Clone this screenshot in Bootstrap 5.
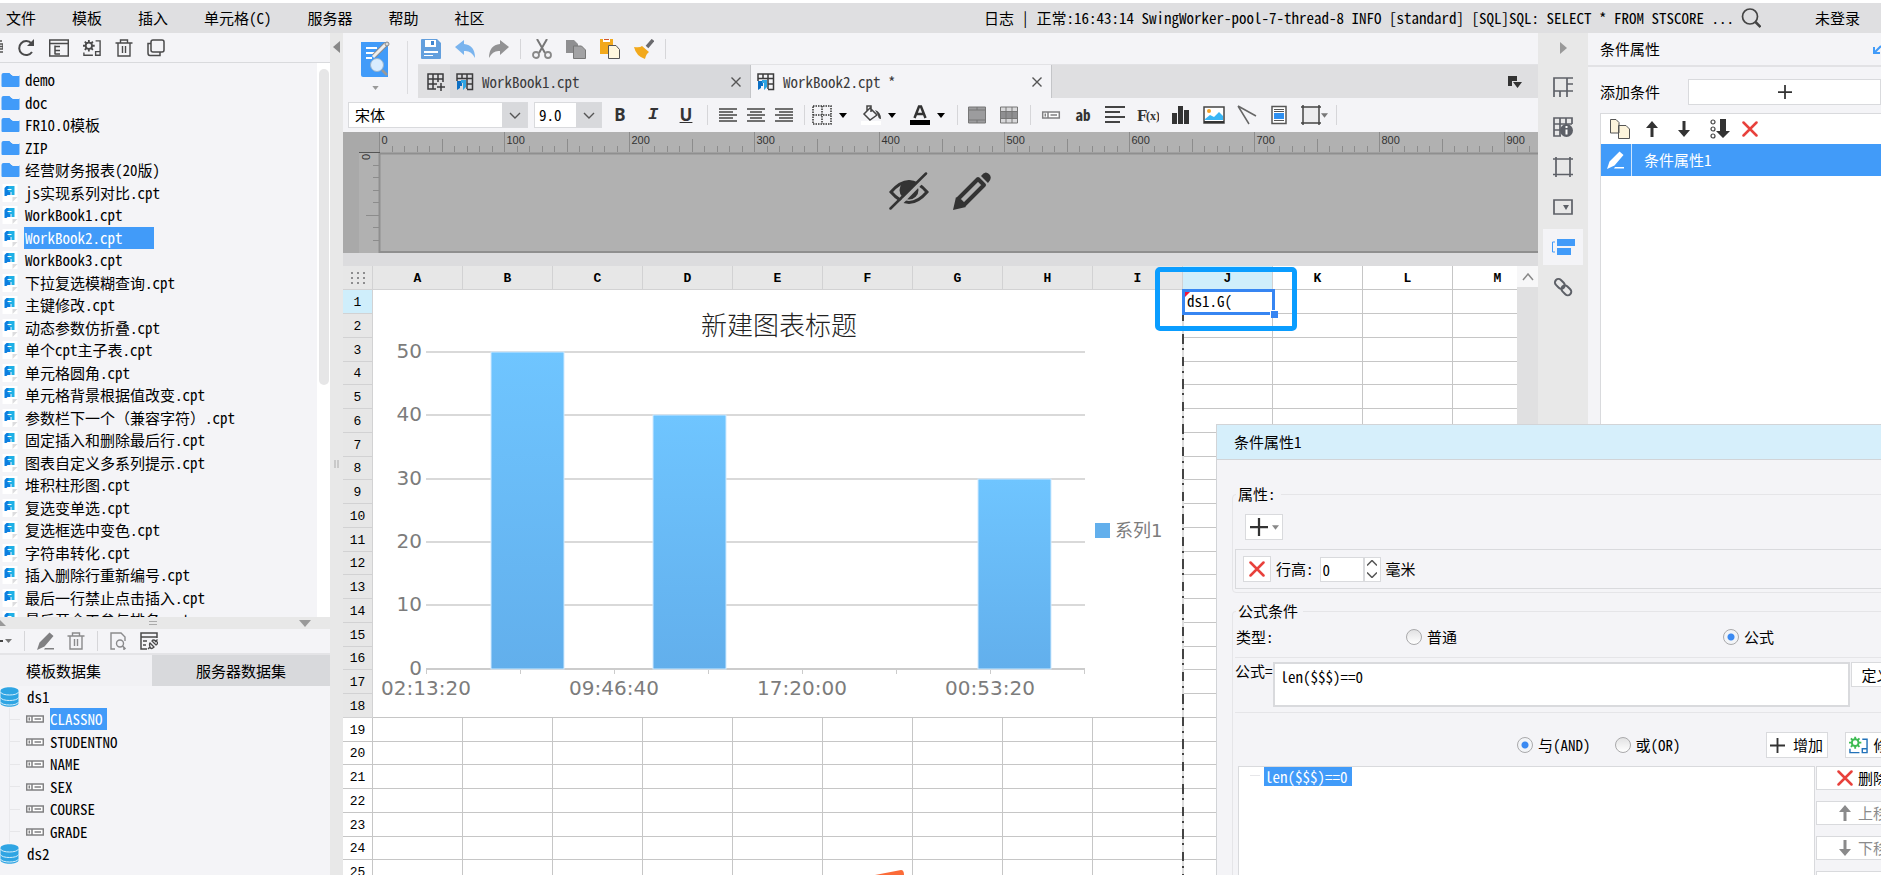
<!DOCTYPE html>
<html lang="zh-CN">
<head>
<meta charset="utf-8">
<meta name="viewport" content="width=device-width, initial-scale=1">
<title>报表设计器</title>
<link href="https://cdn.jsdelivr.net/npm/bootstrap@5.3.0/dist/css/bootstrap.min.css" rel="stylesheet">
<style>
:root{--panel:#f4f4f7;--bar:#dfdfe1;--tab:#d8d9dc;--gutter:#e8e8e8;--line:#d9dadd;--accent:#419bf9;--ink:#333334;}
body{font-family:"Noto Sans CJK SC",sans-serif;font-feature-settings:"hwid";font-size:15px;line-height:22px;color:#000;background:#fff;white-space:nowrap}
button,input,select,textarea{font:inherit;font-feature-settings:inherit;color:inherit}
button{background:none;border:0;padding:0}
svg{display:block;flex:none}
a{color:inherit;text-decoration:none}
.icon{width:20px;height:20px}
.full-width{font-feature-settings:normal}
.menubar{height:33px;background:var(--bar);border-top:3px solid #fff}
.menulist{gap:36px;padding-left:6px}
.log-line{margin-right:7px}
.login-link{margin:0 21px 0 54px}
.side{width:330px;background:var(--panel)}
.side-tools{height:30px;border-bottom:1px solid var(--line);gap:14px}
.tree-list li{height:22px}
.tree-list li:nth-child(even){height:23px}
.file-tree{padding:6px 0 0 1px}
.file-tree li{gap:5px}
.picked{background:var(--accent);color:#fff}
.picked-file{padding:0 31px 0 1px;margin-left:-1px}
.scroll-track{width:13px;background:#fff;padding:6px 1px 0 2px}
.scroll-thumb{height:316px;background:#e6e6e7;border-radius:5px}
.side-split{height:12px;background:var(--gutter)}
.data-tools{height:26px;border-bottom:2px solid #e4e4e7;gap:12px}
.data-tabs{height:31px}
.data-tabs button{background:#f1f1f4}
.data-tabs .own{width:46%;padding-left:26px}
.data-tabs .rest{background:var(--tab)}
.data-pane{height:189px}
.field-list{margin-left:9px;border-left:1px solid #e9e9ec}
.field-list li{gap:6px}
.stub{width:10px;height:1px;background:#e6e6e9}
.gutter{width:13px;background:var(--gutter)}
.app-top{background:var(--panel)}
.mode-btn{width:64px;padding-top:7px}
.mode-sep{width:1px;height:53px;background:#dcdcdf;margin:8px 10px 0 0}
.quick{height:32px;padding-left:3px;gap:14px;border-bottom:1px solid #e2e2e5}
.vsep{width:1px;height:20px;background:#d6d6d9;flex:none}
.quick .vsep{margin:0 -3px}
.tabstrip{height:33px;background:var(--bar)}
.book-tab{width:301px;background:var(--tab);color:#3b3b3c;border-right:1px solid #c4c5c8;padding:0 9px 0 6px}
.book-tab.on{background:var(--panel)}
.fmt{height:34px;padding-left:5px;background:var(--panel)}
.fmt .vsep{margin:0 6px}
.pick{appearance:none;border:1px solid var(--line);height:26px;padding:0 6px;background:url("data:image/svg+xml,%3Csvg xmlns='http://www.w3.org/2000/svg' width='25' height='24'%3E%3Cpath d='M0 0h25v24H0z' fill='%23d8d9dc'/%3E%3Cpath d='M8 10l5 5 5-5' fill='none' stroke='%23555' stroke-width='1.4'/%3E%3C/svg%3E") right center no-repeat #fff}
.pick-font{width:180px;margin-right:6px}
.pick-size{width:68px;padding-left:4px}
.txtbtn{width:33px;padding-left:3px;font-family:"Noto Sans",sans-serif;font-size:17px;color:var(--ink)}
.albtn{width:28px}
.dropset{gap:14px;padding:0 6px 0 1px}
.drop{gap:7px}
.toolset{gap:12px}
.merge-set{padding:0 5px 0 3px}
.ab-btn{color:#333}
.float-btn{color:#777}
.canvas{height:121px;background:#b1b1b1}
.canvas-tools{left:546px;top:40px;gap:24px}
.band{height:13px;background:#dcdcde}
.sheet{background:#fff}
.grid{table-layout:fixed;width:1200px;border-collapse:separate;border-spacing:0;font-size:14px}
.grid tr{height:24px}
.grid tbody tr:nth-child(4n){height:23px}
.grid th,.grid td{padding:0;border:solid #c6c6c6;border-width:0 1px 1px 0;line-height:20px}
.grid th{font-family:"Liberation Mono",monospace;font-size:13px;font-weight:700;text-align:center;vertical-align:bottom;background:#fff}
.grid th:first-child{vertical-align:middle}
.grid tbody th:first-child{font-weight:400;vertical-align:bottom}
.grid th.used{background:#e7e7e7;border-color:#d2d2d3}
.grid th.now{background:#cfeefb;border-color:#d2d2d3}
.grid .chart-cell{border-right-color:#fff}
.cell-now{left:839px;top:23px;width:93px;height:26px;border:3px solid #3685f2;background:#fff;padding-left:2px;line-height:18px}
.cell-now::before{content:"";position:absolute;left:0;top:0;border:solid transparent;border-width:0 5px 5px 0;border-top:5px solid #f0143c}
.cell-now::after{content:"";position:absolute;right:-6px;bottom:-6px;width:8px;height:8px;background:#3685f2;border:solid #fff;border-width:1px 0 0 1px}
.page-edge{left:839px;top:46px;bottom:0;width:2px;background:repeating-linear-gradient(#444 0 9px,#ddd 9px 14px,#444 14px 16px,#ddd 16px 22px,#444 22px 32px,#ddd 32px 36px,#444 36px 38px,#ddd 38px 45px)}
.mark-box{left:812px;top:1px;width:142px;height:64px;border:5px solid #0a9dff;border-radius:5px}
.stamp{left:532px;bottom:0}
.vscroll{width:21px;background:#e0e0e1}
.vscroll button{height:21px;background:#f7f7f8}
.strip{width:50px;background:var(--gutter);gap:4px;padding-top:9px}
.strip button{width:40px;height:36px}
.strip button.on{background:var(--panel)}
.strip .fold{height:12px;margin-bottom:11px}
.props{width:293px;background:var(--panel)}
.props-head{height:34px;border-bottom:2px solid #e2e2e5;padding-left:12px}
.add-row{padding:12px 0 8px 12px}
.add-btn{width:193px;height:26px;background:#fff;border:1px solid var(--line)}
.cond-list{margin-left:12px;border:solid var(--line);border-width:1px 0 0 1px;background:#fff}
.cond-tools{height:30px;padding-left:9px;gap:12px}
.cond-row{height:32px;background:var(--accent);color:#fff}
.cond-pen{width:31px;height:32px;border-right:1px solid #cfe5fd}
.dialog-box{top:424px;right:0;bottom:0;width:665px;background:var(--panel);border:solid #d2d4d7;border-width:1px 0 0 1px}
.dialog-head{height:35px;background:#d6effb;border-bottom:1px solid #d2d4d7;padding-left:17px}
.dialog-in{width:700px;padding-left:15px}
.group{border:1px solid #e5e5e8;border-radius:4px}
.group legend{float:none;width:auto;font-size:15px;line-height:22px;margin:0 0 0 1px;padding:0 5px 0 2px}
.group-a{margin-top:23px;padding:0 0 3px 2px}
.group-b{margin-top:7px;padding-left:2px;border-bottom:0}
.plus-btn{width:38px;height:26px;margin:9px 0 9px 10px}
.btn-box{background:#fff;border:1px solid var(--line);flex:none}
.height-row{height:40px;border:1px solid var(--line);padding-left:7px}
.kill-btn{width:28px;height:26px;margin-right:5px}
.num-box{width:44px;height:25px;border:1px solid var(--line);padding:0 2px;margin-left:6px}
.spin{width:17px;height:25px;margin-right:5px}
.spin button{height:12px}
.type-row{display:grid;grid-template-columns:170px 317px auto;height:30px;margin-left:1px}
.rule{height:1px;background:#e5e5e8;margin:5px 0 4px}
.dot{appearance:none;width:16px;height:16px;border:1px solid #a9a9ab;border-radius:50%;background:linear-gradient(#e2e2e3,#fff);margin:0 5px 0 0;flex:none}
.dot:checked{background:radial-gradient(#3b8af2 0 3px,#f2f4f7 4px)}
.formula-label{width:38px;line-height:17px}
.formula-box{width:577px;height:45px;border:2px solid var(--line);padding:2px 6px;resize:none;background:#fff;margin-right:1px;flex:none}
.define-btn{width:70px;height:25px;padding-left:10px}
.logic-row{margin:15px 0 8px 282px}
.add-cond{width:62px;height:26px;margin:0 17px 0 85px}
.edit-cond{width:80px;height:26px;padding-left:3px;gap:6px}
.cond-tree{width:577px;border:1px solid var(--line);background:#fff;margin:0 1px 0 3px;padding-left:11px;flex:none}
.cond-tree span.picked{padding:0 4px 0 1px;line-height:19px}
.cond-acts{gap:11px}
.cond-acts button{width:100px;height:24px;padding-left:20px;gap:5px}
.cond-acts .dim{color:#8a8a8b}
</style>
</head>
<body class="vh-100 overflow-hidden d-flex flex-column position-relative">

<svg width="0" height="0" class="position-absolute">
 <defs>
  <symbol id="folder" viewBox="0 0 18 16"><path fill="#419bf9" d="M0 3Q0 1 2 1h6l2 2h8v11q0 1-1 1H1q-1 0-1-1z"/><path stroke="#f4f4f7" d="M8 0l3 3.500h7" fill="none"/></symbol>
  <symbol id="cpt" viewBox="0 0 16 18"><path fill="#fff" d="M0 0h15v18H0z"/><path fill="#dcdcde" d="M10 13h5l-5 5z"/><path fill="#0b7fe0" d="M2 4l2-2h4v9H5l-1 1H2z"/><path fill="#1fb0e6" d="M6 2h6v9H9V8H6z"/><path fill="#fff" d="M5 5h4v1H5z"/></symbol>
  <symbol id="db" viewBox="0 0 18 20"><path fill="#2fa5e3" d="M0 4c0-5 18-5 18 0v12c0 5-18 5-18 0z"/><path fill="none" stroke="#d5eefb" d="M0 5c1 4 17 4 18 0M0 10.500c1 4 17 4 18 0M0 15c1 4 17 4 18 0"/></symbol>
  <symbol id="field" viewBox="0 0 18 8"><path fill="#fff" stroke="#808082" stroke-width="1.500" d="M.7 1h16.600v6H.7zM6 1v6M8.500 4h6.500M3.300 2.500v3"/></symbol>
  <symbol id="book" viewBox="0 0 18 18"><path fill="none" stroke="#3b3b3c" stroke-width="1.500" d="M1 8V1h15.500v15.500H11M1 5.500h15.500M6 1v5M11 1v15M11 11h5.500"/><path fill="#0b6fc4" d="M1 8h3v7l-3 2z"/><path fill="#0b6fc4" d="M4 8h2v5H4z"/><path fill="#2fa5e3" d="M5 7h5v7l-3 3V10H5z"/></symbol>
  <symbol id="close" viewBox="0 0 10 10"><path stroke="#555" stroke-width="1.400" d="M.5.5l9 9M9.500.5l-9 9"/></symbol>
  <symbol id="redx" viewBox="0 0 16 16"><path stroke="#e8413c" stroke-width="2.500" stroke-linecap="round" d="M1.500 1.500l13 13M14.500 1.500l-13 13"/></symbol>
  <symbol id="trash" viewBox="0 0 18 18"><path fill="none" stroke="currentColor" stroke-width="1.400" d="M.5 4h17M5.500 4V1h7v3M3 4v13h12V4M7.500 7v7M10.500 7v7"/></symbol>
  <symbol id="plus" viewBox="0 0 16 16"><path stroke="#333" stroke-width="2" d="M8 0v16M0 8h16"/></symbol>
  <symbol id="up" viewBox="0 0 12 16"><path fill="currentColor" d="M6 0l6 7H7.500v9h-3V7H0z"/></symbol>
  <symbol id="down" viewBox="0 0 12 16"><path fill="currentColor" d="M6 16l6-7H7.500V0h-3v9H0z"/></symbol>
  <symbol id="caret" viewBox="0 0 8 5"><path fill="currentColor" d="M0 0h8L4 5z"/></symbol>
  <symbol id="pen" viewBox="0 0 18 18"><path fill="currentColor" d="M12.500 0.500l4 3.500-9 10.500L0 18l2.500-7.500zM8 16h9v1.500H7z"/></symbol>
  <symbol id="gearbox" viewBox="0 0 20 18"><circle cx="6.500" cy="6.500" r="3.500" fill="none" stroke="currentColor" stroke-width="2"/><path stroke="currentColor" stroke-width="2" d="M6.500 0v3M6.500 10v3M0 6.500h3M10 6.500h3M2 2l2 2M9 9l2 2M2 11l2-2M9 4l2-2"/></symbol>
 </defs>
</svg>

<header class="menubar d-flex align-items-center justify-content-between flex-shrink-0">
 <nav class="menulist d-flex">
  <a href="#">文件</a><a href="#">模板</a><a href="#">插入</a><a href="#">单元格(C)</a><a href="#">服务器</a><a href="#">帮助</a><a href="#">社区</a>
 </nav>
 <div class="d-flex align-items-center">
  <span class="log-line">日志 | 正常:16:43:14 SwingWorker-pool-7-thread-8 INFO [standard] [SQL]SQL: SELECT * FROM STSCORE ...</span>
  <button type="button" aria-label="搜索"><svg class="icon" viewBox="0 0 20 20"><circle cx="9" cy="8.500" r="7.500" fill="none" stroke="#444" stroke-width="1.700"/><path stroke="#444" stroke-width="2.500" d="M14.500 14l5 5"/></svg></button>
  <a href="#" class="login-link">未登录</a>
 </div>
</header>

<div class="d-flex flex-fill overflow-hidden">
 <aside class="side d-flex flex-column flex-shrink-0 overflow-hidden">
  <div class="side-tools d-flex align-items-center flex-shrink-0">
   <svg width="3" height="18" viewBox="0 0 3 18"><path fill="none" stroke="#555" stroke-width="1.500" d="M0 2h2M0 5h3v5H0M0 7.500h3M0 13h3"/></svg>
   <button type="button" aria-label="刷新"><svg width="18" height="18" viewBox="0 0 18 18"><path fill="none" stroke="#4a4a4b" stroke-width="2" d="M15 13a7 7 0 1 1-.5-8.500"/><path fill="#4a4a4b" d="M17 0v7h-7z"/></svg></button>
   <button type="button" aria-label="目录"><svg class="icon" viewBox="0 0 20 18"><path fill="none" stroke="#4a4a4b" stroke-width="1.500" d="M.7 1h18.600v16H.7zM.7 4.500h18.600M6 6.500v9M6 7.500h5M6 11.500h5M6 15h5"/></svg></button>
   <button type="button" aria-label="设置"><svg width="18" height="18" viewBox="0 0 20 18" color="#4a4a4b"><use href="#gearbox"/><path fill="none" stroke="#4a4a4b" stroke-width="1.500" d="M14 1h5v16h-5v-4h5M1 14v3h10"/></svg></button>
   <button type="button" aria-label="删除"><svg width="18" height="18" color="#4a4a4b"><use href="#trash"/></svg></button>
   <button type="button" aria-label="复制"><svg width="18" height="18" viewBox="0 0 18 18"><rect x="4" y="1" width="13" height="12" rx="2" fill="none" stroke="#4a4a4b" stroke-width="1.500"/><path fill="none" stroke="#4a4a4b" stroke-width="1.500" d="M4 4.500H1V14q0 2.500 2 2.500h10V13"/></svg></button>
  </div>
  <div class="d-flex flex-fill overflow-hidden">
   <ul class="file-tree tree-list list-unstyled mb-0 flex-fill overflow-hidden" id="files"></ul>
   <div class="scroll-track"><div class="scroll-thumb"></div></div>
  </div>
  <div class="side-split d-flex justify-content-between align-items-center flex-shrink-0">
   <svg width="6" height="6"><path fill="#999" d="M0 0l6 6H0z"/></svg>
   <svg width="8" height="5"><path stroke="#aaa" d="M0 .5h8M0 3.500h8"/></svg>
   <svg width="31" height="7"><path fill="#999" d="M0 0h12L6 7z"/></svg>
  </div>
  <div class="data-tools d-flex align-items-center flex-shrink-0">
   <svg width="12" height="20" viewBox="0 0 12 20"><path fill="#444" d="M0 9h3v2H0z"/><path fill="#777" d="M5 8h7l-3.500 4z"/></svg>
   <span class="vsep"></span>
   <button type="button" aria-label="编辑"><svg width="18" height="18" color="#808082"><use href="#pen"/></svg></button>
   <button type="button" aria-label="删除"><svg width="18" height="18" color="#8a8a8c"><use href="#trash"/></svg></button>
   <span class="vsep"></span>
   <button type="button" aria-label="预览"><svg width="18" height="18" viewBox="0 0 18 18"><path fill="none" stroke="#8a8a8c" stroke-width="1.400" d="M5 17H1V1h10l4 4v4M15 17h-2"/><circle cx="10" cy="11.500" r="3.500" fill="none" stroke="#8a8a8c" stroke-width="1.400"/><path stroke="#8a8a8c" stroke-width="1.700" d="M12.500 14l3 3"/></svg></button>
   <button type="button" aria-label="连接"><svg width="18" height="18" viewBox="0 0 18 18"><path fill="none" stroke="#4a4a4b" stroke-width="1.500" d="M7 17H1V1h16v5M1 5h16M3 9h4M3 13h3"/><path fill="none" stroke="#4a4a4b" stroke-width="1.300" d="M17.500 7.500L15 10M8 17l2-2M10 11l4 4q-3 3-4 0t0-4zM12 9l4 4q3-2 0-4t-4 0z"/></svg></button>
  </div>
  <div class="data-tabs d-flex flex-shrink-0">
   <button type="button" class="own text-start">模板数据集</button><button type="button" class="rest flex-fill">服务器数据集</button>
  </div>
  <div class="data-pane flex-shrink-0">
   <div class="d-flex align-items-center gap-2"><svg width="19" height="20"><use href="#db"/></svg>ds1</div>
   <ul class="field-list tree-list list-unstyled mb-0" id="fields"></ul>
   <div class="d-flex align-items-center gap-2"><svg width="19" height="20"><use href="#db"/></svg>ds2</div>
  </div>
 </aside>
 <div class="gutter flex-shrink-0 d-flex flex-column align-items-center">
  <svg width="7" height="12" class="mt-2"><path fill="#888" d="M7 0v12L0 6z"/></svg>
  <svg width="5" height="8" class="my-auto"><path stroke="#aaa" d="M1 0v8M4 0v8"/></svg>
 </div>

 <main class="flex-fill d-flex flex-column overflow-hidden">
  <div class="app-top d-flex flex-shrink-0">
   <button type="button" class="mode-btn d-flex flex-column align-items-center" aria-label="预览模式">
    <svg width="30" height="38" viewBox="0 0 30 38"><path fill="#419bf9" d="M1 2h27v35H3q-2 0-2-2z"/><path stroke="#fff" stroke-width="2" d="M6 8h11M6 13h9M6 18h6"/><path stroke="#8b8b8d" stroke-width="5" d="M26 4L14 16"/><path stroke="#eee" stroke-width="3" d="M26 4L13 17"/><circle cx="27" cy="4" r="2" fill="#ddd" stroke="#888"/><circle cx="17" cy="25" r="6.500" fill="#d9ecfe" stroke="#9ab4cc"/><path stroke="#999" stroke-width="2.500" d="M22 30l5 5"/></svg>
    <svg width="7" height="4" class="mt-2" color="#999"><use href="#caret"/></svg>
   </button>
   <div class="mode-sep"></div>
   <div class="flex-fill">
    <div class="quick d-flex align-items-center">
     <button type="button" aria-label="保存"><svg class="icon" viewBox="0 0 20 20"><path fill="#639fdd" d="M0 1q0-1 1-1h15l4 4v15q0 1-1 1H1q-1 0-1-1z"/><path fill="#fff" d="M4 1h11v7H4zM3 12h14v2H3zM3 16h9v1H3z"/><path fill="#3f86d2" d="M10 2h3v4h-3z"/></svg></button>
     <button type="button" aria-label="撤销"><svg class="icon" viewBox="0 0 20 20"><path fill="#7ab4ee" d="M0 8L9 1v4q11 1 11 14-4-8-11-7v4z"/></svg></button>
     <button type="button" aria-label="重做"><svg class="icon" viewBox="0 0 20 20"><path fill="#929294" d="M20 8L11 1v4Q0 6 0 19q4-8 11-7v4z"/></svg></button>
     <div class="vsep"></div>
     <button type="button" aria-label="剪切"><svg class="icon" viewBox="0 0 20 20"><path stroke="#777" stroke-width="2" d="M5 0l8 14M15 0L7 14"/><circle cx="4" cy="16" r="3" fill="none" stroke="#888" stroke-width="1.800"/><circle cx="16" cy="16" r="3" fill="none" stroke="#888" stroke-width="1.800"/></svg></button>
     <button type="button" aria-label="复制"><svg class="icon" viewBox="0 0 20 20"><path fill="#8f8f91" d="M0 1h8l4 4v9H0z"/><path fill="#a2a2a4" stroke="#777" d="M7.500 7h8l4 4v8.500h-12z"/></svg></button>
     <button type="button" aria-label="粘贴"><svg class="icon" viewBox="0 0 20 20"><path fill="#f2a91c" d="M0 0h13v15H0z"/><path fill="#fff" d="M3 0h7v3H3z"/><path fill="#d0542c" d="M4 0h5v1H4z"/><path fill="#fff7de" stroke="#555" d="M8.500 6.500H16l3.500 4v9h-11z"/></svg></button>
     <button type="button" aria-label="格式刷"><svg class="icon" viewBox="0 0 20 20"><path stroke="#6a6a6e" stroke-width="3.500" d="M19 1l-6 7"/><path fill="#f2a91c" d="M0 8q6 1 8-1l7 6q-3 2-4 7Q2 17 0 8z"/></svg></button>
     <div class="vsep"></div>
    </div>
    <div class="tabstrip d-flex align-items-center">
     <button type="button" class="ps-2 pe-1" aria-label="新建"><svg width="20" height="18" viewBox="0 0 20 18"><path fill="none" stroke="#3b3b3c" stroke-width="1.500" d="M10 16H2V1h15v8M2 6h15M2 11h9M7 1v15M12 1v8M15 10v8M11 14h8"/></svg></button>
     <div class="book-tab h-100 d-flex align-items-center gap-2"><svg width="18" height="18"><use href="#book"/></svg>WorkBook1.cpt<button type="button" class="ms-auto" aria-label="关闭"><svg width="10" height="10"><use href="#close"/></svg></button></div>
     <div class="book-tab on h-100 d-flex align-items-center gap-2"><svg width="18" height="18"><use href="#book"/></svg>WorkBook2.cpt *<button type="button" class="ms-auto" aria-label="关闭"><svg width="10" height="10"><use href="#close"/></svg></button></div>
     <button type="button" class="ms-auto me-3" aria-label="模板列表"><svg width="14" height="12" viewBox="0 0 14 12"><path fill="#333" d="M0 0h9v5H4v5H0zM5 6h9l-4.500 6z"/></svg></button>
    </div>
   </div>
  </div>
  <div class="fmt d-flex align-items-center flex-shrink-0">
   <select class="pick pick-font" aria-label="字体"><option>宋体</option></select>
   <select class="pick pick-size" aria-label="字号"><option>9.0</option></select>
   <button type="button" class="txtbtn fw-bold">B</button>
   <button type="button" class="txtbtn fst-italic font-monospace fw-bold">I</button>
   <button type="button" class="txtbtn text-decoration-underline fw-bold">U</button>
   <div class="vsep"></div>
   <button type="button" class="albtn" aria-label="左对齐"><svg width="18" height="14" class="mx-auto"><path stroke="#444" stroke-width="1.500" d="M0 1h18M0 4h14M0 7h18M0 10h14M0 13h18"/></svg></button>
   <button type="button" class="albtn" aria-label="居中"><svg width="18" height="14" class="mx-auto"><path stroke="#444" stroke-width="1.500" d="M0 1h18M3 4h12M0 7h18M3 10h12M0 13h18"/></svg></button>
   <button type="button" class="albtn" aria-label="右对齐"><svg width="18" height="14" class="mx-auto"><path stroke="#444" stroke-width="1.500" d="M0 1h18M4 4h14M0 7h18M4 10h14M0 13h18"/></svg></button>
   <div class="vsep"></div>
   <div class="dropset d-flex">
    <button type="button" class="drop d-flex align-items-center" aria-label="边框"><svg class="icon" viewBox="0 0 20 20"><path fill="none" stroke="#333" stroke-width="1.500" stroke-dasharray="1.500 1" d="M1 1h18v18H1zM10 1v18M1 10h18"/></svg><svg width="8" height="5"><use href="#caret"/></svg></button>
    <button type="button" class="drop d-flex align-items-center" aria-label="填充"><svg class="icon" viewBox="0 0 20 20"><path fill="#fff" d="M0 16h20v4H0z"/><path fill="none" stroke="#444" stroke-width="1.500" d="M9 3l7 7-7 5-6-6zM6 6V1h4v6"/><path fill="#444" d="M14 5q6 2 6 9-3 0-3-4z"/></svg><svg width="8" height="5"><use href="#caret"/></svg></button>
    <button type="button" class="drop d-flex align-items-center" aria-label="文字颜色"><svg class="icon" viewBox="0 0 20 20"><path d="M0 15h20v5H0z"/><path fill="none" stroke="#333" stroke-width="2.500" d="M4.500 13L9 1.500h2L15.500 13M6 9h8"/></svg><svg width="8" height="5"><use href="#caret"/></svg></button>
   </div>
   <div class="vsep"></div>
   <div class="toolset merge-set d-flex align-items-center">
    <button type="button" aria-label="合并"><svg class="icon" viewBox="0 0 20 20"><path fill="#9c9c9e" stroke="#777" d="M1.500 2h17v16h-17zM1.500 5h17M1.500 15h17M10 2v3M10 15v3"/></svg></button>
    <button type="button" aria-label="取消合并"><svg class="icon" viewBox="0 0 20 20"><path fill="#d8d8da" stroke="#777" d="M1.500 2h17v16h-17z"/><path fill="#8f8f91" d="M2 7h16v6H2z"/><path fill="none" stroke="#777" d="M1.500 6.500h17M1.500 13.500h17M7 2v16M13 2v16"/></svg></button>
   </div>
   <div class="vsep"></div>
   <div class="toolset d-flex align-items-center ps-1">
    <button type="button" aria-label="数据列"><svg width="20" height="8"><use href="#field"/></svg></button>
    <button type="button" class="icon ab-btn fw-bold d-flex align-items-center justify-content-center">ab</button>
    <button type="button" aria-label="富文本"><svg class="icon" viewBox="0 0 20 20"><path stroke="#444" stroke-width="2" d="M0 2h20M0 7h15M0 12h20M0 17h15"/></svg></button>
    <button type="button" aria-label="公式"><svg width="22" height="20" viewBox="0 0 22 20"><text x="0" y="16" font-family="Liberation Serif,serif" font-size="17" font-weight="700" fill="#333">F</text><text x="9" y="15" font-family="Liberation Serif,serif" font-size="12" font-weight="700" fill="#333">(x)</text></svg></button>
    <button type="button" aria-label="图表"><svg class="icon" viewBox="0 0 20 20"><path fill="#333" d="M1 8h5v11H1zM7 1h5v18H7zM13 5h5v14h-5z"/></svg></button>
    <button type="button" aria-label="图片"><svg width="22" height="20" viewBox="0 0 22 20"><path fill="#fff" stroke="#444" stroke-width="1.500" d="M1 2h20v16H1z"/><circle cx="6" cy="6" r="2" fill="#f7a326"/><path fill="#39b6f5" d="M2 14l5-4 4 2 5-5 4 4v4H2z"/><path fill="#333" d="M1 16h20v2H1z"/></svg></button>
    <button type="button" aria-label="斜线"><svg class="icon" viewBox="0 0 20 20"><path fill="none" stroke="#666" stroke-width="1.500" d="M1 1l18 10M1 1l11 18"/></svg></button>
    <button type="button" aria-label="子报表"><svg class="icon" viewBox="0 0 20 20"><path fill="#fff" stroke="#555" stroke-width="1.500" d="M3 1.500h14v17H3z"/><path stroke="#555" d="M5 4.500h10M5 6.500h10M5 15.500h10"/><path fill="#2e8ff0" d="M5 8h10v6H5z"/></svg></button>
    <button type="button" class="float-btn d-flex align-items-center" aria-label="悬浮"><svg class="icon" viewBox="0 0 20 20"><path fill="#ececee" stroke="#444" stroke-width="1.500" d="M2 2h16v16H2zM2 0v2H0M18 0v2h2M0 18h2v2M18 20v-2h2"/></svg><svg width="7" height="5"><use href="#caret"/></svg></button>
   </div>
   <div class="vsep ms-2"></div>
  </div>

  <div class="canvas position-relative overflow-hidden flex-shrink-0">
   <svg id="ruler" width="100%" height="121"></svg>
   <div class="canvas-tools position-absolute d-flex">
    <button type="button" aria-label="隐藏"><svg width="40" height="38" viewBox="0 0 40 38"><path fill="none" stroke="#333" stroke-width="3" d="M2 20Q20-1 38 20 20 41 2 20z"/><circle cx="20" cy="18" r="9.500" fill="#333"/><path stroke="#b1b1b1" stroke-width="4" d="M41 1L4 39"/><path stroke="#333" stroke-width="2.500" stroke-linecap="round" d="M37 1.500L1.500 36.500"/></svg></button>
    <button type="button" aria-label="编辑"><svg width="38" height="38" viewBox="0 0 38 38"><path fill="none" stroke="#333" stroke-width="4" stroke-linejoin="round" d="M5 27L25 7l6 6-20 20z"/><path fill="#333" d="M3 25l-3 13 13-3zM28 4q4-6 8-2t-1 9z"/></svg></button>
   </div>
  </div>
  <div class="band flex-shrink-0"></div>

  <div class="d-flex flex-fill overflow-hidden">
   <div class="sheet flex-fill position-relative overflow-hidden">
    <table class="grid" id="grid"></table>
    <div class="page-edge position-absolute"></div>
    <div class="cell-now position-absolute">ds1.G(</div>
    <div class="mark-box position-absolute"></div>
    <svg class="stamp position-absolute" width="32" height="5"><path fill="#fb6b38" d="M0 5L26 0q3 0 3 5z"/></svg>
   </div>
   <div class="vscroll flex-shrink-0"><button type="button" class="w-100 d-flex align-items-center justify-content-center" aria-label="向上"><svg width="12" height="8"><path fill="none" stroke="#888" stroke-width="1.500" d="M1 7l5-6 5 6"/></svg></button></div>
  </div>
 </main>

 <nav class="strip flex-shrink-0 d-flex flex-column align-items-center" aria-label="属性切换">
  <button type="button" class="fold" aria-label="收起"><svg width="7" height="12" class="mx-auto"><path fill="#999" d="M0 0v12l7-6z"/></svg></button>
  <button type="button" aria-label="单元格元素"><svg class="icon mx-auto" viewBox="0 0 20 20"><path fill="none" stroke="#5d6067" stroke-width="1.700" d="M1 20V1h19M1 14h19M14 1v19M14 7h6M7 14v6"/></svg></button>
  <button type="button" aria-label="单元格属性"><svg class="icon mx-auto" viewBox="0 0 20 20"><path fill="none" stroke="#5d6067" stroke-width="1.700" d="M8 19H1V1h18v6M1 7h18M7 1v18M13 1v6M1 13h6"/><circle cx="13.500" cy="13.500" r="6.500" fill="#5d6067"/><path stroke="#fff" stroke-width="2" d="M13.500 9v2M13.500 12.500v5"/></svg></button>
  <button type="button" aria-label="悬浮元素"><svg class="icon mx-auto" viewBox="0 0 20 20"><path fill="none" stroke="#5d6067" stroke-width="1.700" d="M3 0v20M17 0v20M0 2h20M0 17.500h20"/></svg></button>
  <button type="button" aria-label="控件设置"><svg class="icon mx-auto" viewBox="0 0 20 20"><path fill="none" stroke="#5d6067" stroke-width="1.700" d="M1 3h18v14H1z"/><path fill="#5d6067" d="M10 8h6l-3 5z"/></svg></button>
  <button type="button" class="on" aria-label="条件属性"><svg width="24" height="20" class="mx-auto" viewBox="0 0 24 20"><path fill="#419bf9" d="M6 2h18v7H6zM6 11h14v7H6z"/><path fill="none" stroke="#419bf9" d="M4 5H1.500v10H4"/></svg></button>
  <button type="button" aria-label="超级链接"><svg class="icon mx-auto" viewBox="0 0 20 20"><g fill="none" stroke="#5d6067" stroke-width="2"><rect x="-5" y="-3.500" width="11" height="7" rx="3.500" transform="translate(6.500 6.500) rotate(45)"/><rect x="-5" y="-3.500" width="11" height="7" rx="3.500" transform="translate(13 13) rotate(45)"/></g></svg></button>
 </nav>

 <aside class="props flex-shrink-0 d-flex flex-column overflow-hidden">
  <div class="props-head d-flex align-items-center justify-content-between">条件属性<svg width="8" height="9"><path fill="none" stroke="#419bf9" stroke-width="2" d="M1 2v6h6M1 8l7-7"/></svg></div>
  <div class="add-row d-flex align-items-center justify-content-between"><label for="addc">添加条件</label><button type="button" id="addc" class="add-btn" aria-label="添加条件"><svg width="14" height="14" viewBox="0 0 16 16" class="mx-auto"><use href="#plus"/></svg></button></div>
  <div class="cond-list flex-fill">
   <div class="cond-tools d-flex align-items-center">
    <button type="button" aria-label="复制"><svg width="20" height="20" viewBox="0 0 20 20"><path fill="#fdf4dc" stroke="#555" d="M.5.5H6l3 3V14H.5zM8.500 6.500H16l3.500 3.500v9.500h-11z"/></svg></button>
    <button type="button" class="ms-1" aria-label="上移"><svg width="12" height="16" color="#333"><use href="#up"/></svg></button>
    <button type="button" class="mx-2" aria-label="下移"><svg width="12" height="16" color="#333"><use href="#down"/></svg></button>
    <button type="button" aria-label="排序"><svg class="icon" viewBox="0 0 20 20"><g fill="none" stroke="#444" stroke-width="1.200"><circle cx="3" cy="3" r="2"/><circle cx="3" cy="10" r="2"/><circle cx="3" cy="17" r="2"/></g><path fill="#333" d="M10 0h6v12h4l-7 7-7-7h4z"/></svg></button>
    <button type="button" aria-label="删除"><svg width="16" height="16"><use href="#redx"/></svg></button>
   </div>
   <div class="cond-row d-flex align-items-center"><span class="cond-pen d-flex align-items-center justify-content-center"><svg width="18" height="18"><use href="#pen"/></svg></span><span class="ms-2 ps-1">条件属性1</span></div>
  </div>
 </aside>
</div>

<section class="dialog-box position-absolute overflow-hidden d-flex flex-column" role="dialog" aria-labelledby="dlgt">
 <div class="dialog-head d-flex align-items-center flex-shrink-0"><span id="dlgt">条件属性1</span></div>
 <div class="dialog-in d-flex flex-column flex-fill">
  <fieldset class="group group-a">
   <legend>属性:</legend>
   <button type="button" class="btn-box plus-btn d-flex align-items-center justify-content-center" aria-label="添加属性"><svg width="18" height="18" viewBox="0 0 16 16"><use href="#plus"/></svg><svg width="7" height="5" class="ms-1" color="#888"><use href="#caret"/></svg></button>
   <div class="height-row d-flex align-items-center">
    <button type="button" class="btn-box kill-btn d-flex align-items-center justify-content-center" aria-label="移除"><svg width="16" height="16"><use href="#redx"/></svg></button>
    <label for="rowh">行高:</label><input id="rowh" class="num-box" type="text" value="0">
    <div class="btn-box spin d-flex flex-column"><button type="button" aria-label="增"><svg width="10" height="6" class="mx-auto"><path fill="none" stroke="#555" stroke-width="1.500" d="M0 5.500l5-5 5 5"/></svg></button><button type="button" aria-label="减"><svg width="10" height="6" class="mx-auto"><path fill="none" stroke="#555" stroke-width="1.500" d="M0 .5l5 5 5-5"/></svg></button></div>
    毫米
   </div>
  </fieldset>
  <fieldset class="group group-b flex-fill d-flex flex-column">
   <legend>公式条件</legend>
   <div class="type-row align-items-center"><span>类型:</span><label class="d-flex align-items-center"><input class="dot" type="radio" name="kind">普通</label><label class="d-flex align-items-center"><input class="dot" type="radio" name="kind" checked>公式</label></div>
   <div class="rule"></div>
   <div class="d-flex align-items-start"><label class="formula-label" for="fml">公式=</label><textarea id="fml" class="formula-box">len($$$)==0</textarea><button type="button" class="btn-box define-btn text-start">定义</button></div>
   <div class="rule"></div>
   <div class="logic-row d-flex align-items-center"><label class="d-flex align-items-center me-4"><input class="dot" type="radio" name="logic" checked>与(AND)</label><label class="d-flex align-items-center"><input class="dot" type="radio" name="logic">或(OR)</label>
    <button type="button" class="btn-box add-cond d-flex align-items-center justify-content-center gap-2"><svg width="15" height="15" viewBox="0 0 16 16"><use href="#plus"/></svg>增加</button>
    <button type="button" class="btn-box edit-cond d-flex align-items-center"><svg width="19" height="18" viewBox="0 0 20 18" color="#3dbb52"><use href="#gearbox"/><path fill="none" stroke="#2272b9" stroke-width="1.500" d="M14 3h5v14h-5v-4h5M1 13v4h10"/></svg>修改</button></div>
   <div class="d-flex flex-fill">
    <div class="cond-tree d-flex align-items-start"><span class="stub mt-2 me-1"></span><span class="picked">len($$$)==0</span></div>
    <div class="cond-acts d-flex flex-column">
     <button type="button" class="btn-box d-flex align-items-center"><svg width="16" height="16"><use href="#redx"/></svg>删除</button>
     <button type="button" class="btn-box dim d-flex align-items-center"><svg width="16" height="16"><use href="#up"/></svg>上移</button>
     <button type="button" class="btn-box dim d-flex align-items-center"><svg width="16" height="16"><use href="#down"/></svg>下移</button>
     <button type="button" class="btn-box" aria-label="更多"></button>
    </div>
   </div>
  </fieldset>
 </div>
</section>

<script src="https://cdn.jsdelivr.net/npm/bootstrap@5.3.0/dist/js/bootstrap.bundle.min.js"></script>
<script>
const folders = ["demo","doc","FR10.0模板","ZIP","经营财务报表(20版)"];
const files = ["js实现系列对比","WorkBook1","WorkBook2","WorkBook3","下拉复选模糊查询","主键修改","动态参数仿折叠","单个cpt主子表","单元格圆角","单元格背景根据值改变","参数栏下一个<span class=\"full-width\">（兼容字符）</span>","固定插入和删除最后行","图表自定义多系列提示","堆积柱形图","复选变单选","复选框选中变色","字符串转化","插入删除行重新编号","最后一行禁止点击插入","最后开合工参与排名"];
document.getElementById("files").innerHTML =
  folders.map(n => `<li class="d-flex align-items-center"><svg width="19" height="16"><use href="#folder"/></svg><span>${n}</span></li>`).join("") +
  files.map(n => `<li class="d-flex align-items-center"><svg width="19" height="18"><use href="#cpt"/></svg><span class="${n === "WorkBook2" ? "picked picked-file" : ""}">${n}.cpt</span></li>`).join("");
document.getElementById("fields").innerHTML = ["CLASSNO","STUDENTNO","NAME","SEX","COURSE","GRADE"].map((n, i) =>
  `<li class="d-flex align-items-center"><span class="stub"></span><svg width="18" height="8"><use href="#field"/></svg><span class="${i ? "" : "picked pe-1"}">${n}</span></li>`).join("");

// rulers: 100 units are 125 screen pixels
let r = '<path fill="#a9a9a9" d="M0 0h16v121H0zM16 0h20v20H16z"/><path stroke="#8f8f8f" stroke-width="2" d="M36 21.5h3000M36.500 21v100M36 120h3000"/><path stroke="#555" d="M36.500 0v21M16 20.500h20"/>';
for (let i = 0; i < 150; i++) {
  const x = Math.round(36 + i * 12.5) + .5;
  r += `<path stroke="#8c8c8c" d="M${x} ${i % 10 == 0 ? 0 : i % 5 == 0 ? 7 : 14}V20"/>`;
  if (i % 10 == 0) r += `<text x="${x + 2}" y="12" font-family="Liberation Sans,sans-serif" font-size="11" fill="#333">${i * 10}</text>`;
  if (i && i < 8) r += `<path stroke="#8c8c8c" d="M${i == 5 ? 23 : 30} ${x - 16}H36"/>`;
}
r += '<text transform="translate(27 28) rotate(-90)" font-family="Liberation Sans,sans-serif" font-size="11" fill="#333">0</text>';
document.getElementById("ruler").innerHTML = r;

// column chart placed over A1:I18
const Y = [62,125,189,252,315,379];
let c = '<svg width="809" height="427" viewBox="0 0 809 427"><defs><linearGradient id="g" x2="0" y2="1"><stop stop-color="#6fc5ff"/><stop offset="1" stop-color="#62afec"/></linearGradient></defs>';
c += '<text x="406" y="45" text-anchor="middle" font-size="26" font-weight="300" fill="#222">新建图表标题</text><g font-family="DejaVu Sans,sans-serif" font-size="20" fill="#7c7c7c">';
Y.forEach((y, i) => c += `<path stroke="${i == 5 ? "#bbb" : "#cdcdcd"}" stroke-width="1.500" d="M53 ${y}h659"/><text x="49" y="${y + 6}" text-anchor="end">${50 - i * 10}</text>`);
for (let i = 0; i < 8; i++) c += `<path stroke="#ccc" d="M${53.5 + i * 94} 379v5"/>`;
["02:13:20","09:46:40","17:20:00","00:53:20"].forEach((t, i) => c += `<text x="${53 + i * 188}" y="405" text-anchor="middle">${t}</text>`);
[[118,0],[280,1],[605,2]].forEach(([x, k]) => c += `<rect x="${x}" y="${Y[k]}" width="73" height="${379 - Y[k]}" fill="url(#g)" stroke="#cfeaff"/>`);
c += '<rect x="722" y="233" width="15" height="15" fill="#62afec"/></g><text x="742" y="247" font-size="18" fill="#7c7c7c">系列<tspan font-family="DejaVu Sans,sans-serif">1</tspan></text></svg>';
c = c.replace('[605,2]', '[605,2]');

let t = '<colgroup><col width="30">' + '<col width="90">'.repeat(13) + '</colgroup><thead><tr><th class="used"><svg class="mx-auto" width="14" height="12"><path stroke="#8d8d8f" stroke-width="2" stroke-dasharray="2 4" d="M0 1h14M0 6h14M0 11h14"/></svg></th>';
t += [..."ABCDEFGHIJKLM"].map((l, i) => `<th class="${i < 9 ? "used" : i == 9 ? "now" : ""}">${l}</th>`).join("") + "</tr></thead><tbody>";
for (let i = 1; i < 27; i++) {
  t += `<tr><th class="${i == 1 ? "now" : i < 19 ? "used" : ""}">${i}</th>`;
  if (i == 1) t += `<td class="chart-cell" colspan="9" rowspan="18">${c}</td>`;
  t += "<td></td>".repeat(i < 19 ? 4 : 13) + "</tr>";
}
document.getElementById("grid").innerHTML = t + "</tbody>";
</script>
</body>
</html>
